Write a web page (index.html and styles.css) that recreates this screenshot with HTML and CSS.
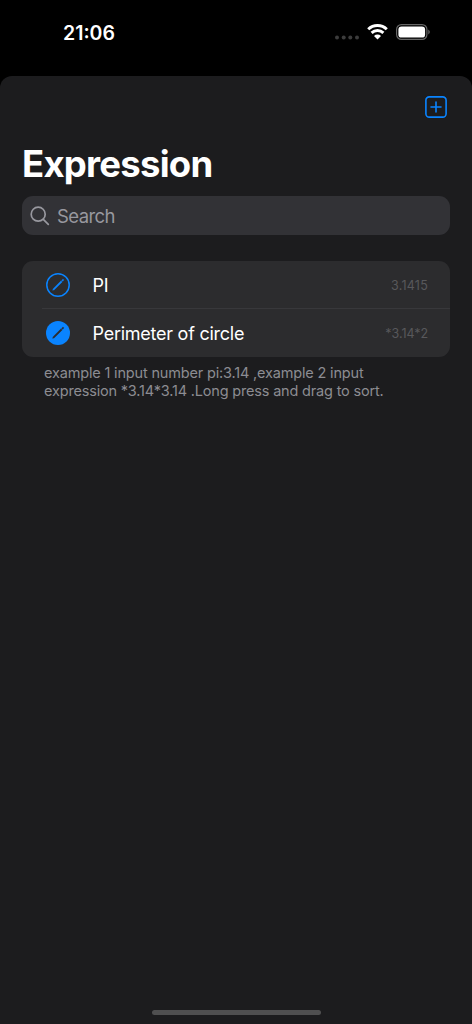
FILE: index.html
```html
<!DOCTYPE html>
<html lang="en">
<head>
<meta charset="utf-8">
<title>Expression</title>
<link rel="stylesheet" href="styles.css">
</head>
<body>
<header class="status">
  <span class="time">21:06</span>
  <div class="indicators">
    <svg class="dots" width="24" height="5" viewBox="0 0 24 5"><circle cx="2" cy="2.5" r="2"/><circle cx="8.7" cy="2.5" r="2"/><circle cx="15.3" cy="2.5" r="2"/><circle cx="22" cy="2.5" r="2"/></svg>
    <svg class="wifi" width="21" height="16" viewBox="0 0 21 16"><path d="M1.2 5.3a13.4 13.4 0 0 1 18.6 0M4.6 8.9a8.6 8.6 0 0 1 11.8 0" fill="none" stroke="#fff" stroke-width="2.9"/><path d="M10.5 15.5l-3.5-3.5a5 5 0 0 1 7 0z" fill="#fff"/></svg>
    <svg class="battery" width="35" height="16" viewBox="0 0 35 16"><rect x=".6" y=".6" width="30.3" height="14.8" rx="4.8" fill="none" stroke="#666" stroke-width="1.2"/><rect x="2.4" y="2.4" width="26.7" height="11.2" rx="3.2" fill="#fff"/><path d="M32.3 5.5q3 2.5 0 5z" fill="#666"/></svg>
  </div>
</header>
<main class="sheet">
  <nav class="toolbar">
    <svg width="22" height="22" viewBox="0 0 22 22" fill="none" stroke="#0a84ff" stroke-width="1.6" stroke-linecap="round"><rect x=".9" y=".9" width="20.2" height="20.2" rx="3.4"/><path d="M11 6v10M6 11h10"/></svg>
  </nav>
  <h1 class="title">Expression</h1>
  <div class="search">
    <svg width="20" height="20" viewBox="0 0 20 20" fill="none" stroke="#98989f" stroke-width="1.7" stroke-linecap="round"><circle cx="8.2" cy="8.2" r="7"/><path d="M13.3 13.3l5 5"/></svg>
    <span class="placeholder">Search</span>
  </div>
  <section class="list">
    <div class="row">
      <svg class="icon" width="24" height="24" viewBox="0 0 24 24"><circle cx="12" cy="12" r="11.2" fill="none" stroke="#0a84ff" stroke-width="1.5"/><path d="M6.7 17.3l.5-1.6 7.9-7.9 1.1 1.1-7.9 7.9zM15.7 7.2l.8-.8q.5-.4 1 0t0 1l-.8.8z" fill="#0a84ff" stroke="#0a84ff" stroke-width=".4"/></svg>
      <div class="cell"><span class="name">PI</span><span class="value">3.1415</span></div>
    </div>
    <div class="row">
      <svg class="icon" width="24" height="24" viewBox="0 0 24 24"><circle cx="12" cy="12" r="12" fill="#0a84ff"/><path d="M6.7 17.3l.5-1.6 7.9-7.9 1.1 1.1-7.9 7.9zM15.7 7.2l.8-.8q.5-.4 1 0t0 1l-.8.8z" fill="#2c2c2e" stroke="#2c2c2e" stroke-width=".5"/></svg>
      <div class="cell"><span class="name">Perimeter of circle</span><span class="value formula">*3.14*2</span></div>
    </div>
  </section>
  <p class="hint"><span class="hint-first">example 1 input number pi:3.14 ,example 2 input</span><br><span class="hint-second">expression *3.14*3.14 .Long press and drag to sort.</span></p>
  <div class="home"></div>
</main>
</body>
</html>
```
FILE: styles.css
```css
* { box-sizing: border-box; }
body {
  margin: 0;
  height: 1024px;
  display: flex;
  flex-direction: column;
  background: #000;
  color: #fff;
  font-family: Inter, sans-serif;
  overflow: hidden;
}
svg { display: block; flex: none; }
.status {
  height: 76px;
  padding: 20px 41px 0 63px;
  display: flex;
  justify-content: space-between;
  align-items: flex-start;
}
.time { font-size: 19.5px; line-height: 26px; font-weight: 600; }
.indicators { display: flex; align-items: center; padding-top: 4px; }
.dots { fill: #3c3c3c; margin: 10px 8px 0 0; }
.wifi { margin-right: 8px; }
.sheet {
  flex: 1;
  display: flex;
  flex-direction: column;
  background: #1c1c1e;
  border-radius: 12px 12px 0 0;
  padding: 0 22px;
}
.toolbar { height: 65px; padding: 20px 3px 0 0; display: flex; justify-content: flex-end; }
.title { margin: 0; height: 55px; font-size: 36.5px; line-height: 46px; font-weight: 700; letter-spacing: -0.75px; }
.title, .name, .value, .hint, .time { white-space: nowrap; }
.search {
  height: 39px;
  padding-left: 8px;
  display: flex;
  align-items: center;
  gap: 7px;
  border-radius: 11px;
  background: #323236;
  color: #98989f;
}
.placeholder { font-size: 18.5px; letter-spacing: -0.6px; }
.list { margin-top: 26px; border-radius: 11px; background: #2c2c2e; }
.row { height: 48px; padding-left: 24px; display: flex; align-items: center; }
.icon { margin-right: 22.5px; }
.cell { flex: 1; padding-right: 22px; display: flex; align-items: center; justify-content: space-between; }
.name { font-size: 18px; line-height: 24px; letter-spacing: -0.25px; padding-top: 2px; }
.value { font-size: 12.5px; letter-spacing: 0.25px; color: #58585b; }
.formula { letter-spacing: -0.05px; }
.row:first-child { background: linear-gradient(#38383b, #38383b) 20px 100% / 100% 1px no-repeat; }
.hint { margin: 7px 0 0 22px; font-size: 14.5px; line-height: 18px; color: #8c8c92; }
.hint-first { letter-spacing: -0.17px; }
.hint-second { letter-spacing: -0.18px; }
.home { width: 169px; height: 5px; margin: auto auto 9px; border-radius: 3px; background: #4f4f50; }
```
